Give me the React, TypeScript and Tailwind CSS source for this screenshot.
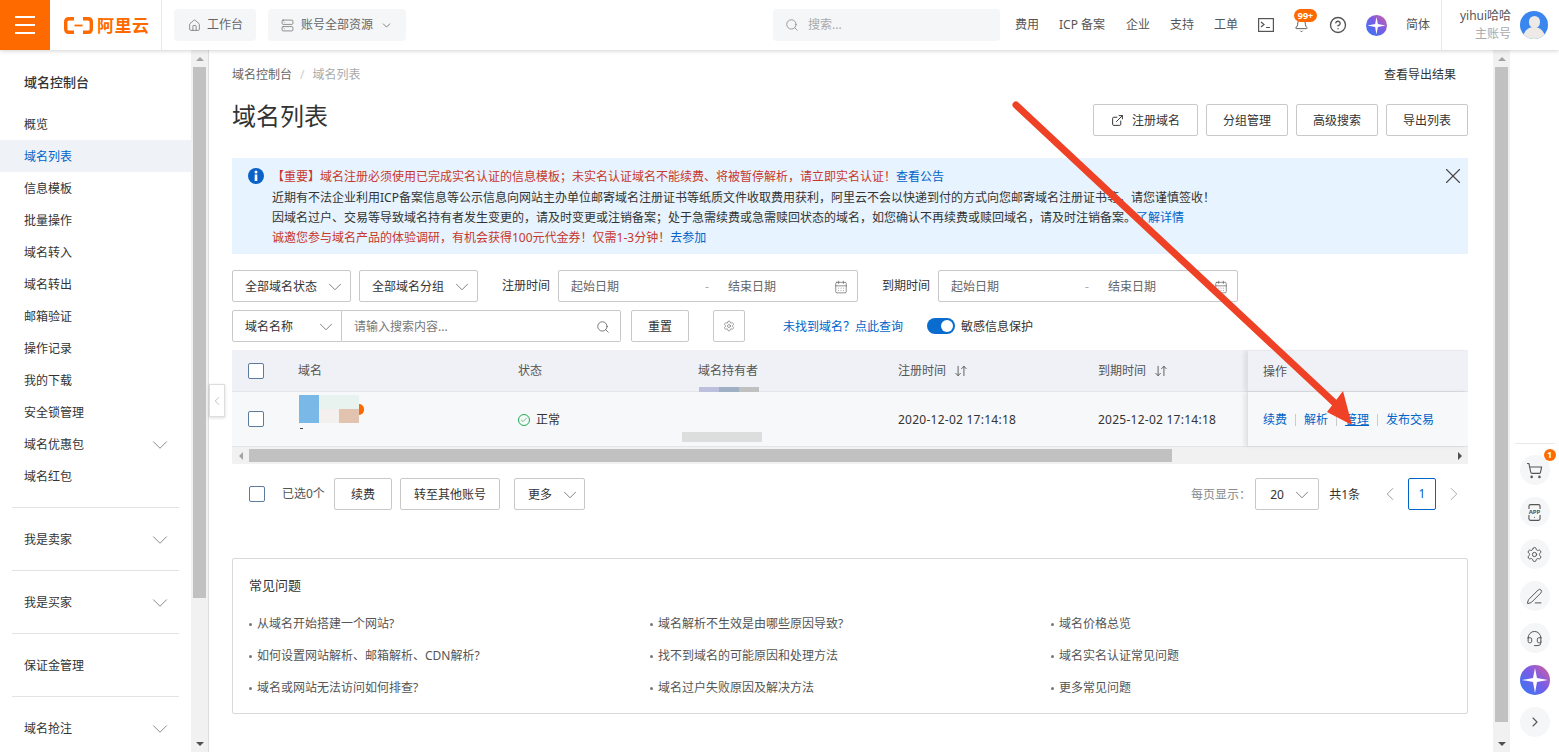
import { Home, ChevronDown, ChevronLeft, ChevronRight, Search, Bell, CircleHelp, CalendarDays, Settings, ShoppingCart, PenLine, Headset, ExternalLink, X, Check, ArrowDownUp, Server, Smartphone } from "lucide-react";

const FONT = "font-['Noto_Sans','Noto_Sans_CJK_SC',sans-serif]";

const menuItems = ["概览", "域名列表", "信息模板", "批量操作", "域名转入", "域名转出", "邮箱验证", "操作记录", "我的下载", "安全锁管理"];

const faqColumns = [
    ["从域名开始搭建一个网站?", "如何设置网站解析、邮箱解析、CDN解析?", "域名或网站无法访问如何排查?"],
    ["域名解析不生效是由哪些原因导致?", "找不到域名的可能原因和处理方法", "域名过户失败原因及解决方法"],
    ["域名价格总览", "域名实名认证常见问题", "更多常见问题"],
];

// round logo used in the top bar and in the right rail
function PlusLogo({ size }: { size: number }) {
    return (
        <svg width={size} height={size} viewBox="0 0 30 30" className="shrink-0">
            <defs>
                <linearGradient id={`plus-${size}`} x1="0" y1="1" x2="1" y2="0">
                    <stop offset="0" stopColor="#2f7bf5" />
                    <stop offset="0.55" stopColor="#7a5ce6" />
                    <stop offset="1" stopColor="#d9609a" />
                </linearGradient>
            </defs>
            <circle cx="15" cy="15" r="15" fill={`url(#plus-${size})`} />
            <path d="M15 3 L17 13 L28 15 L17 17 L15 28 L13 17 L2 15 L13 13 Z" fill="#fff" />
        </svg>
    );
}

function Scrollbar({ thumbClass }: { thumbClass: string }) {
    return (
        <div className="w-[17px] shrink-0 bg-[#f1f1f1] flex flex-col items-center">
            <div className="h-[17px] flex items-center justify-center shrink-0">
                <div className="w-0 h-0 border-x-[4px] border-x-transparent border-b-[4px] border-b-[#a3a3a3]" />
            </div>
            <div className={`w-[13px] bg-[#c1c1c1] ${thumbClass}`} />
            <div className="flex-1" />
            <div className="h-[17px] flex items-center justify-center shrink-0">
                <div className="w-0 h-0 border-x-[4px] border-x-transparent border-t-[4px] border-t-[#505050]" />
            </div>
        </div>
    );
}

function Header() {
    return (
        <header className="h-[50px] bg-white shadow-[0_1px_4px_rgba(0,0,0,0.18)] flex items-center relative z-20 shrink-0 text-[#555]">
            <div className="w-[50px] h-[50px] bg-[#ff6a00] flex flex-col items-center justify-center gap-[6px]">
                <div className="w-5 h-[2px] bg-white" />
                <div className="w-5 h-[2px] bg-white" />
                <div className="w-5 h-[2px] bg-white" />
            </div>
            <div className="w-[112px] h-full border-r border-[#e8e8e8] flex items-center pl-[14px] gap-1 shrink-0">
                <svg width="29" height="17" viewBox="0 0 29 17" fill="none" stroke="#ff6a00" strokeWidth="3.4">
                    <path d="M10 1.7 H5 Q1.7 1.7 1.7 5 V12 Q1.7 15.3 5 15.3 H10" />
                    <path d="M19 1.7 H24 Q27.3 1.7 27.3 5 V12 Q27.3 15.3 24 15.3 H19" />
                    <path d="M10.5 8.5 H18.5" strokeWidth="1.8" />
                </svg>
                <span className="text-[17px] leading-none font-bold text-[#ff6a00] tracking-[0.5px]">阿里云</span>
            </div>
            <div className="ml-3 h-8 w-[82px] bg-[#f5f6f8] rounded-sm flex items-center pl-[14px] gap-[6px] text-xs text-[#666]">
                <Home size={13} strokeWidth={1.3} />
                <span>工作台</span>
            </div>
            <div className="ml-3 h-8 w-[138px] bg-[#f5f6f8] rounded-sm flex items-center pl-[13px] text-xs text-[#666]">
                <Server size={13} strokeWidth={1.3} />
                <span className="ml-[7px]">账号全部资源</span>
                <ChevronDown size={13} strokeWidth={1.5} className="ml-[7px]" />
            </div>
            <div className="ml-[367px] h-8 w-[227px] bg-[#f5f6f8] rounded-sm flex items-center pl-3 gap-[9px] text-xs text-[#aaa]">
                <Search size={14} strokeWidth={1.4} className="text-[#888]" />
                <span>搜索...</span>
            </div>
            <div className="ml-[15px] flex items-center text-xs gap-5 text-[#555]">
                <span>费用</span>
                <span className="w-[47px] whitespace-nowrap">ICP 备案</span>
                <span>企业</span>
                <span>支持</span>
                <span>工单</span>
            </div>
            <svg width="16" height="14" viewBox="0 0 16 14" fill="none" stroke="#555" strokeWidth="1.2" className="ml-[20px]">
                <rect x="0.6" y="0.6" width="14.8" height="12.8" />
                <path d="M3 4 L6 6.5 L3 9 M8 9.5 H12" />
            </svg>
            <div className="relative ml-[20px]">
                <Bell size={15} strokeWidth={1.5} />
                <span className="absolute -top-[9px] left-0 h-[13px] w-[23px] rounded-full bg-[#ff6a00] text-white text-[9px] leading-[13px] text-center font-bold">99+</span>
            </div>
            <CircleHelp size={18} strokeWidth={1.8} className="ml-[20px]" />
            <div className="ml-[19px]"><PlusLogo size={21} /></div>
            <span className="ml-[19px] text-xs">简体</span>
            <div className="ml-[11px] h-full w-[70px] border-l border-[#e8e8e8] flex flex-col items-end justify-center text-xs leading-[18px] shrink-0">
                <span className="text-[#555]">yihui哈哈</span>
                <span className="text-[#aaa]">主账号</span>
            </div>
            <div className="ml-[9px] w-[28px] h-[28px] rounded-full bg-[#3a86ee] overflow-hidden flex flex-col items-center shrink-0">
                <div className="w-[11px] h-[12px] rounded-full bg-[#ece9e6] mt-[5px] shrink-0" />
                <div className="w-[22px] h-[14px] rounded-t-full bg-[#ece9e6] -mt-[1px] shrink-0" />
            </div>
        </header>
    );
}

function SideRow({ label, active, chevron }: { label: string; active?: boolean; chevron?: boolean }) {
    return (
        <div className={`h-8 pl-6 pr-[18px] pt-px flex items-center justify-between text-xs ${active ? "bg-[#eff3f8] text-[#0064c8]" : "text-[#333]"}`}>
            <span>{label}</span>
            {chevron && <ChevronDown size={26} strokeWidth={0.8} className="text-[#777] -my-1" />}
        </div>
    );
}

function Sidebar() {
    return (
        <aside className="w-[191px] shrink-0 bg-white overflow-hidden">
            <div className="h-[58px] pl-6 pt-[8px] flex items-center text-[13px] font-medium text-[#333]">域名控制台</div>
            {menuItems.map((item) => (
                <SideRow key={item} label={item} active={item === "域名列表"} />
            ))}
            <SideRow label="域名优惠包" chevron />
            <SideRow label="域名红包" />
            {["我是卖家", "我是买家", "保证金管理", "域名抢注"].map((item) => (
                <div key={item} className="mt-[15px] pt-[15px] mx-0">
                    <div className="mx-3 -mt-[15px] mb-[15px] h-px bg-[#e3e3e3]" />
                    <SideRow label={item} chevron={item !== "保证金管理"} />
                </div>
            ))}
        </aside>
    );
}

function SelectBox({ label, className }: { label: string; className: string }) {
    return (
        <div className={`h-8 border border-[#c9c9c9] rounded-[2px] bg-white flex items-center justify-between pl-3 pr-[4px] pt-px text-xs text-[#333] shrink-0 ${className}`}>
            <span>{label}</span>
            <ChevronDown size={22} strokeWidth={0.9} className="text-[#666]" />
        </div>
    );
}

function Btn({ label, className }: { label: string; className: string }) {
    return (
        <div className={`h-8 border border-[#c9c9c9] rounded-[2px] bg-white pt-px flex items-center justify-center text-xs text-[#333] shrink-0 ${className}`}>{label}</div>
    );
}

function DateRange({ className }: { className: string }) {
    return (
        <div className={`h-8 border border-[#c9c9c9] rounded-[2px] flex items-center pl-3 pr-[9px] pt-px text-xs text-[#666] shrink-0 ${className}`}>
            <span className="w-[134px]">起始日期</span>
            <span className="w-[23px] text-[#aaa]">-</span>
            <span className="flex-1">结束日期</span>
            <CalendarDays size={14} strokeWidth={1.1} className="text-[#555]" />
        </div>
    );
}

function CheckBox() {
    return <div className="w-4 h-4 border border-[#5c7a9c] rounded-[2px] bg-white shrink-0" />;
}

function SortHeader({ label, className }: { label: string; className: string }) {
    return (
        <div className={`flex items-center gap-2 ${className}`}>
            <span>{label}</span>
            <ArrowDownUp size={14} strokeWidth={1.4} className="text-[#444]" />
        </div>
    );
}

function DomainTable() {
    return (
        <div className="mt-2">
            <div className="h-[42px] bg-[#eff1f6] border-b border-[#e3e5e9] pt-px flex items-center text-xs text-[#555] relative">
                <div className="w-[66px] pl-4"><CheckBox /></div>
                <div className="w-[220px]">域名</div>
                <div className="w-[180px]">状态</div>
                <div className="w-[200px]">域名持有者</div>
                <SortHeader label="注册时间" className="w-[200px]" />
                <SortHeader label="到期时间" className="w-[149px]" />
                <div className="flex-1 h-full -mt-px pt-[3px] pl-[15px] flex items-center border-l border-[#dde0e5] shadow-[-3px_0_4px_rgba(0,0,0,0.08)] bg-[#eff1f6]">操作</div>
                <div className="absolute left-[467px] bottom-[-1px] w-[60px] h-[5px] flex">
                    <div className="flex-1 bg-[#bcc0dc]" />
                    <div className="flex-1 bg-[#a0b0c4]" />
                    <div className="flex-1 bg-[#c0c0c0]" />
                </div>
            </div>
            <div className="h-[55px] bg-[#f7f8fa] border-b border-[#e3e5e9] flex items-center text-xs text-[#333] relative">
                <div className="w-[66px] pl-4"><CheckBox /></div>
                <div className="w-[220px] h-full pt-[3px] pl-px">
                    <div className="flex items-center">
                        <div className="w-[60px] h-[28px] grid grid-cols-3 grid-rows-2">
                            <div className="row-span-2 bg-[#7ab8e8]" />
                            <div className="bg-[#e8f2ee]" />
                            <div className="bg-[#e8f2ee]" />
                            <div className="bg-[#f4f0ee]" />
                            <div className="bg-[#e2c3b0]" />
                        </div>
                        <div className="w-[5px] h-[11px] rounded-r-full bg-[#ff6a00]" />
                    </div>
                    <div className="h-px w-[3px] bg-[#444] ml-px mt-[5px]" />
                </div>
                <div className="w-[180px] flex items-center gap-[6px] pt-px">
                    <div className="w-3 h-3 rounded-full border border-[#22a94f] flex items-center justify-center">
                        <Check size={8} strokeWidth={2} className="text-[#22a94f]" />
                    </div>
                    <span>正常</span>
                </div>
                <div className="w-[200px] relative self-stretch">
                    <div className="absolute left-[-16px] top-[40px] w-[80px] h-[10px] bg-[#dcdddd]" />
                </div>
                <div className="w-[200px] pt-px tracking-[0.25px]">2020-12-02 17:14:18</div>
                <div className="w-[149px] pt-px tracking-[0.25px] whitespace-nowrap">2025-12-02 17:14:18</div>
                <div className="flex-1 h-full pt-px pl-[15px] flex items-center border-l border-[#dde0e5] shadow-[-3px_0_4px_rgba(0,0,0,0.08)] bg-[#f7f8fa] text-[#0064c8]">
                    <span>续费</span>
                    <span className="w-px h-3 bg-[#ccc] mx-[8px]" />
                    <span>解析</span>
                    <span className="w-px h-3 bg-[#ccc] mx-[8px]" />
                    <span className="underline">管理</span>
                    <span className="w-px h-3 bg-[#ccc] mx-[8px]" />
                    <span>发布交易</span>
                </div>
            </div>
            <div className="h-[17px] bg-[#f1f1f1] flex items-center">
                <div className="w-[17px] flex justify-center shrink-0">
                    <div className="w-0 h-0 border-y-[4px] border-y-transparent border-r-[4px] border-r-[#a3a3a3]" />
                </div>
                <div className="w-[923px] h-[13px] bg-[#c1c1c1]" />
                <div className="flex-1" />
                <div className="w-[17px] flex justify-center shrink-0">
                    <div className="w-0 h-0 border-y-[4px] border-y-transparent border-l-[4px] border-l-[#505050]" />
                </div>
            </div>
        </div>
    );
}

function MainContent() {
    return (
        <main className="flex-1 min-w-0 bg-white border-l border-[#ddd] relative">
            <div className="absolute left-0 top-[334px] w-[16px] h-[33px] bg-white border border-[#ddd] shadow-[0_1px_3px_rgba(0,0,0,0.15)] flex items-center justify-center z-10">
                <ChevronLeft size={20} strokeWidth={1} className="text-[#999]" />
            </div>
            <div className="pl-[23px] pr-[25px]">
                <div className="h-[48px] pt-[2px] flex items-center justify-between text-xs">
                    <div className="flex items-center text-[#666]">
                        <span>域名控制台</span>
                        <span className="mx-2 text-[#ccc]">/</span>
                        <span className="text-[#aaa]">域名列表</span>
                    </div>
                    <span className="text-[#333] mr-3">查看导出结果</span>
                </div>
                <div className="h-[38px] mt-[6px] flex items-start justify-between">
                    <h1 className="text-2xl leading-[24px] font-normal text-[#333]">域名列表</h1>
                    <div className="flex gap-2">
                        <div className="h-8 w-[105px] border border-[#c9c9c9] rounded-[2px] pt-px flex items-center justify-center gap-2 text-xs text-[#333]">
                            <ExternalLink size={13} strokeWidth={1.8} />
                            <span>注册域名</span>
                        </div>
                        <Btn label="分组管理" className="w-[82px]" />
                        <Btn label="高级搜索" className="w-[82px]" />
                        <Btn label="导出列表" className="w-[82px]" />
                    </div>
                </div>
                <div className="mt-[16px] h-[96px] bg-[#e7f3fe] pl-[40px] pr-3 pt-[9px] relative text-xs leading-[20px] text-[#333] whitespace-nowrap">
                    <svg width="16" height="16" viewBox="0 0 16 16" className="absolute left-[16px] top-[10px]">
                        <circle cx="8" cy="8" r="8" fill="#0a62c8" />
                        <circle cx="8" cy="4" r="1.5" fill="#fff" />
                        <rect x="6.7" y="6.5" width="2.6" height="6.5" fill="#fff" />
                    </svg>
                    <X size={26} strokeWidth={1} className="absolute right-[2px] top-[5px] text-[#444]" />
                    <div className="text-[#c8372d] mb-px">【重要】域名注册必须使用已完成实名认证的信息模板；未实名认证域名不能续费、将被暂停解析，请立即实名认证！<span className="text-[#0064c8]">查看公告</span></div>
                    <div>近期有不法企业利用ICP备案信息等公示信息向网站主办单位邮寄域名注册证书等纸质文件收取费用获利，阿里云不会以快递到付的方式向您邮寄域名注册证书等，请您谨慎签收！</div>
                    <div>因域名过户、交易等导致域名持有者发生变更的，请及时变更或注销备案；处于急需续费或急需赎回状态的域名，如您确认不再续费或赎回域名，请及时注销备案。<span className="text-[#0064c8]">了解详情</span></div>
                    <div className="text-[#c8372d]">诚邀您参与域名产品的体验调研，有机会获得100元代金券！仅需1-3分钟！<span className="text-[#0064c8]">去参加</span></div>
                </div>

                <div className="mt-4 flex items-center text-xs text-[#333]">
                    <SelectBox label="全部域名状态" className="w-[119px]" />
                    <SelectBox label="全部域名分组" className="w-[119px] ml-2" />
                    <span className="ml-6 w-[56px]">注册时间</span>
                    <DateRange className="w-[300px]" />
                    <span className="ml-6 w-[56px]">到期时间</span>
                    <DateRange className="w-[300px]" />
                </div>
                <div className="mt-2 flex items-center text-xs text-[#333]">
                    <SelectBox label="域名名称" className="w-[110px] rounded-r-none" />
                    <div className="h-8 w-[279px] border border-l-0 border-[#c9c9c9] rounded-r-[2px] pt-px flex items-center justify-between pl-3 pr-[10px] text-[#777]">
                        <span>请输入搜索内容...</span>
                        <Search size={14} strokeWidth={1.3} className="text-[#555]" />
                    </div>
                    <Btn label="重置" className="w-[58px] ml-[10px]" />
                    <div className="h-8 w-8 ml-[24px] border border-[#c9c9c9] rounded-[2px] flex items-center justify-center">
                        <Settings size={12} strokeWidth={1.2} className="text-[#666]" />
                    </div>
                    <span className="ml-[38px] pt-px text-[#0064c8]">未找到域名？点此查询</span>
                    <div className="ml-[24px] w-[28px] h-4 rounded-full bg-[#0a6ccf] flex items-center justify-end pr-[2px]">
                        <div className="w-3 h-3 rounded-full bg-white" />
                    </div>
                    <span className="ml-[6px] pt-px">敏感信息保护</span>
                </div>

                <DomainTable />

                <div className="mt-[14px] pl-[17px] flex items-center text-xs text-[#333]">
                    <CheckBox />
                    <span className="ml-[17px] w-[52px] text-[#555]">已选0个</span>
                    <Btn label="续费" className="w-[58px]" />
                    <Btn label="转至其他账号" className="w-[100px] ml-2" />
                    <div className="h-8 w-[71px] ml-[14px] pl-[13px] pr-[3px] pt-px border border-[#c9c9c9] rounded-[2px] flex items-center justify-between">
                        <span>更多</span>
                        <ChevronDown size={22} strokeWidth={0.9} className="text-[#666]" />
                    </div>
                    <div className="flex-1" />
                    <span className="text-[#888] pt-px">每页显示：</span>
                    <div className="ml-[4px] h-8 w-[64px] pl-[14px] pr-[5px] pt-px border border-[#c9c9c9] rounded-[2px] flex items-center justify-between">
                        <span>20</span>
                        <ChevronDown size={22} strokeWidth={0.9} className="text-[#666]" />
                    </div>
                    <span className="ml-[10px] pt-px">共1条</span>
                    <ChevronLeft size={22} strokeWidth={0.9} className="ml-[19px] text-[#888]" />
                    <div className="ml-[7px] h-8 w-[28px] border border-[#0064c8] rounded-[2px] flex items-center justify-center text-[#0064c8]">1</div>
                    <ChevronRight size={22} strokeWidth={0.9} className="ml-[7px] mr-[3px] text-[#999]" />
                </div>

                <div className="mt-[48px] h-[156px] border border-[#d9d9d9] rounded-[2px] pl-4 pt-[16px] text-xs">
                    <div className="text-[13px] text-[#333] leading-5">常见问题</div>
                    <div className="mt-[19px] grid grid-cols-3 gap-x-0 w-[1203px]">
                        {faqColumns.map((col, i) => (
                            <div key={i} className="flex flex-col gap-3 text-[#555]">
                                {col.map((q) => (
                                    <div key={q} className="h-5 flex items-center gap-[5px]">
                                        <span className="w-[3px] h-[3px] rounded-full bg-[#777]" />
                                        <span>{q}</span>
                                    </div>
                                ))}
                            </div>
                        ))}
                    </div>
                </div>
            </div>
        </main>
    );
}

function RailButton({ children }: { children: React.ReactNode }) {
    return <div className="w-[30px] h-[30px] rounded-full bg-[#f5f6f8] flex items-center justify-center relative text-[#555]">{children}</div>;
}

function RightRail() {
    return (
        <div className="w-[49px] shrink-0 bg-white flex flex-col items-center">
            <div className="flex-1" />
            <div className="w-10 h-px bg-[#e8e8e8] mb-[11px]" />
            <div className="flex flex-col gap-3 pb-[15px]">
                <RailButton>
                    <ShoppingCart size={17} strokeWidth={1.6} />
                    <span className="absolute -top-[6px] -right-[6px] w-3 h-3 rounded-full bg-[#ff6a00] text-white text-[9px] leading-3 text-center font-bold">1</span>
                </RailButton>
                <RailButton>
                    <div className="relative flex items-center justify-center">
                        <Smartphone size={19} strokeWidth={1.4} />
                        <span className="absolute text-[6px] leading-none font-bold bg-[#f5f6f8] px-px">APP</span>
                    </div>
                </RailButton>
                <RailButton><Settings size={17} strokeWidth={1.4} /></RailButton>
                <RailButton><PenLine size={17} strokeWidth={1.4} /></RailButton>
                <RailButton><Headset size={17} strokeWidth={1.4} /></RailButton>
                <PlusLogo size={30} />
                <RailButton><ChevronRight size={16} strokeWidth={1.6} /></RailButton>
            </div>
        </div>
    );
}

export default function App() {
    return (
        <div className={`h-screen w-full overflow-hidden flex flex-col bg-white relative ${FONT}`}>
            <Header />
            <div className="flex-1 min-h-0 flex">
                <Sidebar />
                <div className="flex"><Scrollbar thumbClass="h-[531px]" /></div>
                <MainContent />
                <div className="flex"><Scrollbar thumbClass="h-[655px]" /></div>
                <RightRail />
            </div>
            {/* red arrow drawn on top of the screenshot */}
            <svg className="absolute inset-0 pointer-events-none z-30" width="1559" height="752">
                <line x1="1016" y1="105" x2="1340" y2="408" stroke="#ee4125" strokeWidth="7" strokeLinecap="round" />
                <polygon points="1343,391 1327,412 1352,425" fill="#ee4125" />
            </svg>
        </div>
    );
}
